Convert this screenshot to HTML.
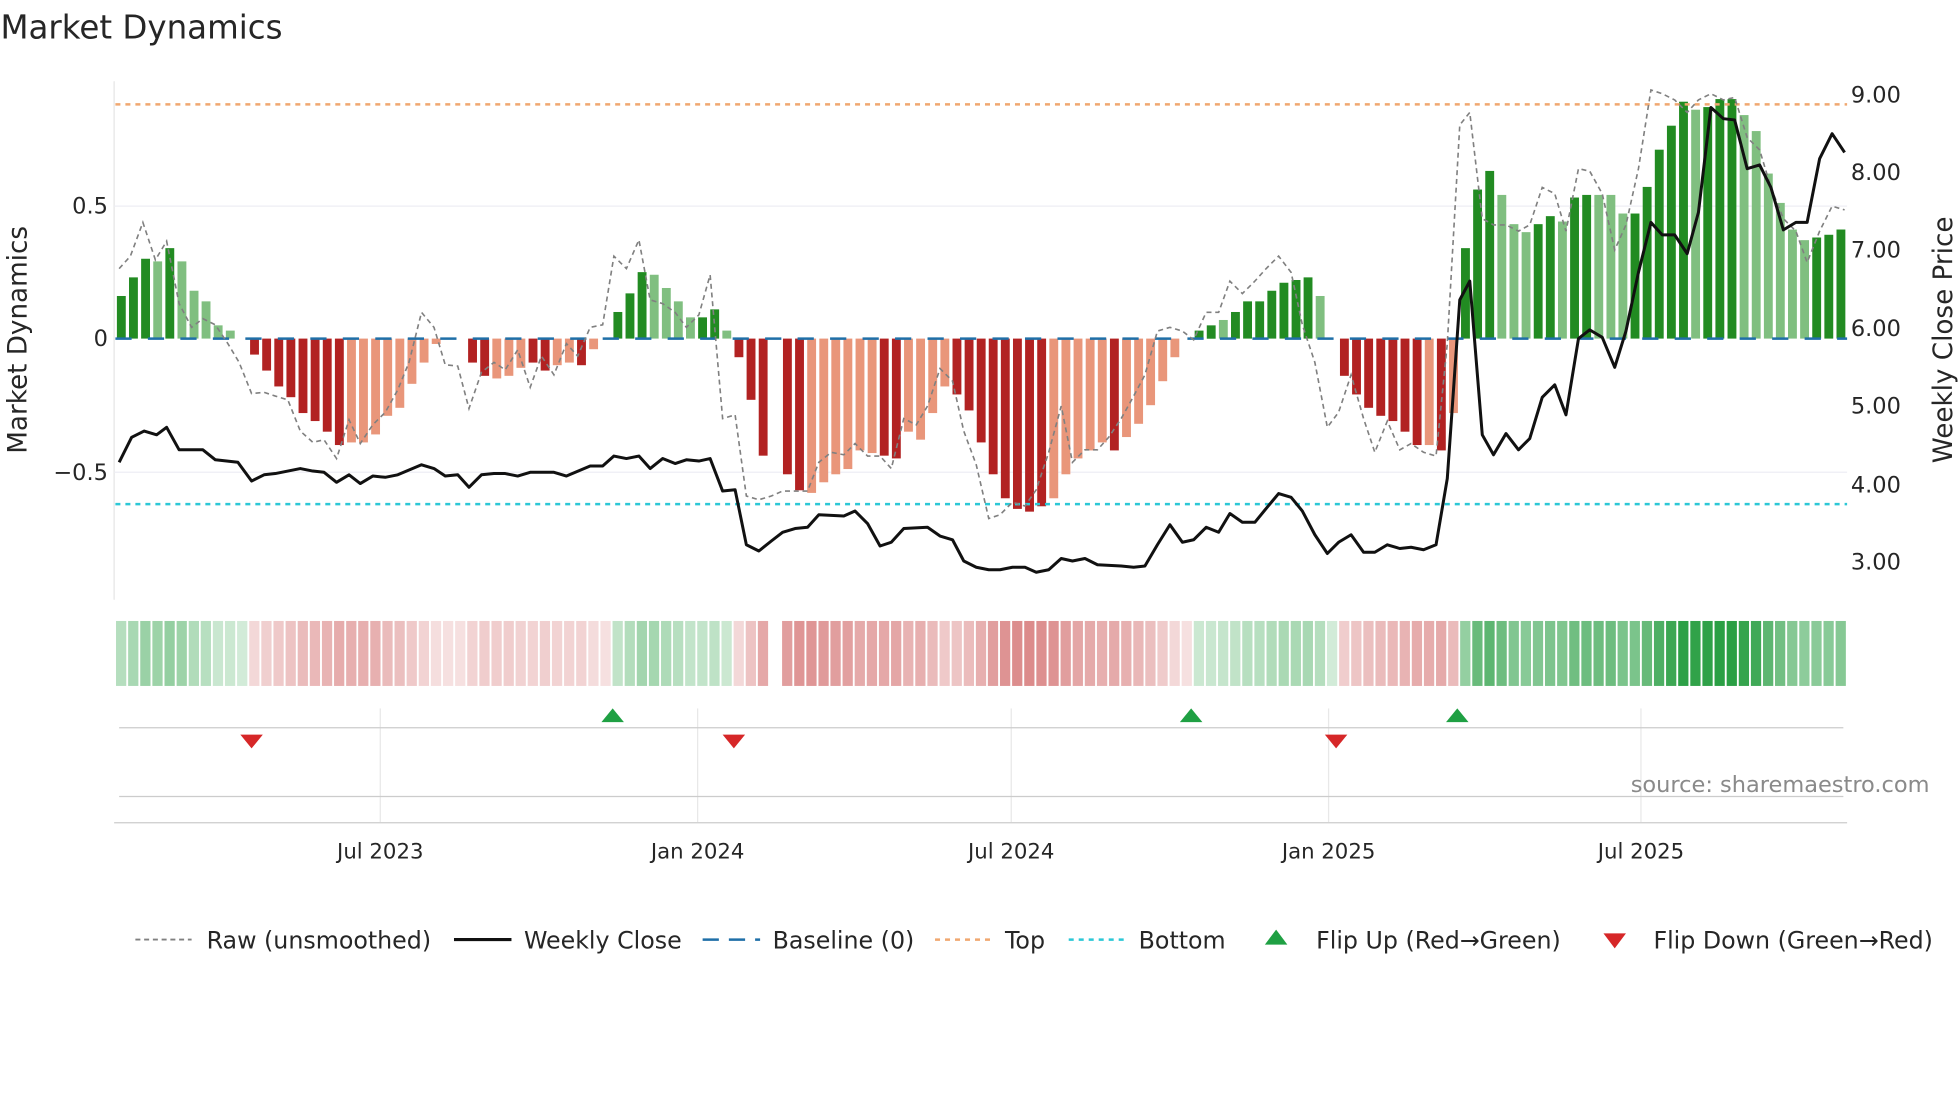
<!DOCTYPE html>
<html><head><meta charset="utf-8"><style>
html,body{margin:0;padding:0;background:#fff;width:1960px;height:1102px;overflow:hidden}
svg{display:block}
text{font-family:"DejaVu Sans","Liberation Sans",sans-serif;fill:#262626}
</style></head><body>
<svg id="s" width="1960" height="1102" viewBox="0 0 1568 882" xmlns="http://www.w3.org/2000/svg">
<text x="0" y="31" font-size="26">Market Dynamics</text>
<line x1="91" y1="65" x2="91" y2="480" stroke="#e6e6e6"/>
<line x1="91" y1="165" x2="1478" y2="165" stroke="#eeeef4"/>
<line x1="91" y1="378" x2="1478" y2="378" stroke="#eeeef4"/>
<g id="bars"></g>
<line x1="92" y1="271" x2="1478" y2="271" stroke="#1f6fa8" stroke-width="2" stroke-dasharray="13,13"/>
<line x1="92" y1="83.5" x2="1478" y2="83.5" stroke="#f0a870" stroke-width="2" stroke-dasharray="4,4"/>
<line x1="92" y1="403.5" x2="1478" y2="403.5" stroke="#2cc8d6" stroke-width="2" stroke-dasharray="4,4"/>
<polyline id="raw" fill="none" stroke="#808080" stroke-width="1.3" stroke-dasharray="4,3"/>
<polyline id="close" fill="none" stroke="#111" stroke-width="2.4" stroke-linejoin="round"/>
<g font-size="18" text-anchor="end">
<text x="86" y="171">0.5</text><text x="86" y="277">0</text><text x="86" y="384">−0.5</text>
</g>
<g font-size="18">
<text x="1481" y="82">9.00</text><text x="1481" y="144">8.00</text><text x="1481" y="206">7.00</text>
<text x="1481" y="269">6.00</text><text x="1481" y="331">5.00</text><text x="1481" y="394">4.00</text><text x="1481" y="456">3.00</text>
</g>
<text font-size="21" text-anchor="middle" transform="translate(21,272) rotate(-90)">Market Dynamics</text>
<text font-size="21" text-anchor="middle" transform="translate(1562,272) rotate(-90)">Weekly Close Price</text>
<g id="heat"></g>
<g stroke="#e8e8e8">
<line x1="304" y1="567" x2="304" y2="658"/><line x1="558" y1="567" x2="558" y2="658"/><line x1="809" y1="567" x2="809" y2="658"/><line x1="1063" y1="567" x2="1063" y2="658"/><line x1="1313" y1="567" x2="1313" y2="658"/>
</g>
<line x1="95" y1="582.5" x2="1475" y2="582.5" stroke="#cccccc"/>
<line x1="95" y1="637.5" x2="1475" y2="637.5" stroke="#cccccc"/>
<line x1="91" y1="658.5" x2="1478" y2="658.5" stroke="#cccccc"/>
<g fill="#1fa043">
<polygon points="490,567 499,578 481,578"/><polygon points="953,567 962,578 944,578"/><polygon points="1166,567 1175,578 1157,578"/>
</g>
<g fill="#d62728">
<polygon points="192,588 210,588 201,599"/><polygon points="578,588 596,588 587,599"/><polygon points="1060,588 1078,588 1069,599"/>
</g>
<text x="1544" y="634" font-size="18" fill="#8a8a8a" text-anchor="end" style="fill:#8a8a8a">source: sharemaestro.com</text>
<g font-size="17" text-anchor="middle">
<text x="304" y="687">Jul 2023</text><text x="558" y="687">Jan 2024</text><text x="809" y="687">Jul 2024</text><text x="1063" y="687">Jan 2025</text><text x="1313" y="687">Jul 2025</text>
</g>
<g font-size="19">
<line x1="108" y1="752" x2="153" y2="752" stroke="#808080" stroke-width="1.5" stroke-dasharray="4,3"/>
<text x="165" y="759">Raw (unsmoothed)</text>
<line x1="363" y1="752" x2="409" y2="752" stroke="#111" stroke-width="2.5"/>
<text x="419" y="759">Weekly Close</text>
<line x1="562" y1="752" x2="608" y2="752" stroke="#1f6fa8" stroke-width="2" stroke-dasharray="13,8"/>
<text x="618" y="759">Baseline (0)</text>
<line x1="748" y1="752" x2="794" y2="752" stroke="#f0a870" stroke-width="2" stroke-dasharray="4,4"/>
<text x="804" y="759">Top</text>
<line x1="855" y1="752" x2="901" y2="752" stroke="#2cc8d6" stroke-width="2" stroke-dasharray="4,4"/>
<text x="911" y="759">Bottom</text>
<polygon points="1021,744 1030,756 1012,756" fill="#1fa043"/>
<text x="1053" y="759">Flip Up (Red→Green)</text>
<polygon points="1283,747 1301,747 1292,759" fill="#d62728"/>
<text x="1323" y="759">Flip Down (Green→Red)</text>
</g>
</svg>
<script>
var B=[[.16,'G'],[.23,'G'],[.30,'G'],[.29,'g'],[.34,'G'],[.29,'g'],[.18,'g'],[.14,'g'],[.05,'g'],[.03,'g'],[0,'g'],
[-.06,'R'],[-.12,'R'],[-.18,'R'],[-.22,'R'],[-.28,'R'],[-.31,'R'],[-.35,'R'],[-.40,'R'],[-.39,'r'],[-.39,'r'],[-.36,'r'],[-.29,'r'],[-.26,'r'],[-.17,'r'],[-.09,'r'],[-.02,'r'],[0,'r'],[0,'r'],
[-.09,'R'],[-.14,'R'],[-.15,'r'],[-.14,'r'],[-.11,'r'],[-.09,'R'],[-.12,'R'],[-.10,'r'],[-.09,'r'],[-.10,'R'],[-.04,'r'],[0,'r'],
[.10,'G'],[.17,'G'],[.25,'G'],[.24,'g'],[.19,'g'],[.14,'g'],[.08,'g'],[.08,'G'],[.11,'G'],[.03,'g'],
[-.07,'R'],[-.23,'R'],[-.44,'R'],[null,'R'],[-.51,'R'],[-.57,'R'],[-.58,'r'],[-.54,'r'],[-.51,'r'],[-.49,'r'],[-.42,'r'],[-.43,'r'],[-.44,'R'],[-.45,'R'],[-.35,'r'],[-.38,'r'],[-.28,'r'],[-.18,'r'],[-.21,'R'],[-.27,'R'],[-.39,'R'],[-.51,'R'],[-.60,'R'],[-.64,'R'],[-.65,'R'],[-.63,'R'],[-.60,'r'],[-.51,'r'],[-.45,'r'],[-.42,'r'],[-.39,'r'],[-.42,'R'],[-.37,'r'],[-.32,'r'],[-.25,'r'],[-.16,'r'],[-.07,'r'],[0,'r'],
[.03,'G'],[.05,'G'],[.07,'g'],[.10,'G'],[.14,'G'],[.14,'G'],[.18,'G'],[.21,'G'],[.22,'G'],[.23,'G'],[.16,'g'],[0,'g'],
[-.14,'R'],[-.21,'R'],[-.26,'R'],[-.29,'R'],[-.31,'R'],[-.35,'R'],[-.40,'R'],[-.40,'r'],[-.42,'R'],[-.28,'r'],
[.34,'G'],[.56,'G'],[.63,'G'],[.54,'g'],[.43,'g'],[.40,'g'],[.43,'G'],[.46,'G'],[.44,'g'],[.53,'G'],[.54,'G'],[.54,'g'],[.54,'g'],[.47,'g'],[.47,'G'],[.57,'G'],[.71,'G'],[.80,'G'],[.89,'G'],[.86,'g'],[.87,'G'],[.90,'G'],[.90,'G'],[.84,'g'],[.78,'g'],[.62,'g'],[.51,'g'],[.41,'g'],[.37,'g'],[.38,'G'],[.39,'G'],[.41,'G']];
var C={G:'#228b22',g:'#80bf80',R:'#b22222',r:'#e9967a'};
var n=B.length,x0=92,w=(1478-92)/n,bh='',hh='';
for(var i=0;i<n;i++){var v=B[i][0],x=x0+i*w;
 if(v!==null&&v!==0){var y=271-v*213,t=Math.min(y,271),h=Math.abs(v*213);
  bh+='<rect x="'+(x+1.2).toFixed(1)+'" y="'+t.toFixed(1)+'" width="'+(w-2.6).toFixed(1)+'" height="'+h.toFixed(1)+'" fill="'+C[B[i][1]]+'"/>';}
 if(v!==null){var pos=B[i][1]=='G'||B[i][1]=='g';var a=0.2+0.75*Math.min(1,Math.abs(v)/0.9);
  hh+='<rect x="'+(x+0.5).toFixed(1)+'" y="497" width="'+(w-1.5).toFixed(1)+'" height="52" fill="'+(pos?'#1f9a3a':'#c03030')+'" fill-opacity="'+(pos?a:a*0.75).toFixed(2)+'"/>';}
}
document.getElementById('bars').innerHTML=bh;document.getElementById('heat').innerHTML=hh;
var CL="95,370 105,350 115,345 125,348 133,342 143,360 162,360 172,368 190,370 201,385 211,380 220,379 240,375 250,377 259,378 269,386 279,380 288,387 298,381 308,382 318,380 337,372 347,375 356,381 366,380 375,390 385,380 395,379 404,379 414,381 424,378 443,378 453,381 472,373 482,373 491,365 501,367 511,365 520,375 530,367 540,371 549,368 559,369 568,367 578,393 588,392 597,436 607,441 617,433 626,426 636,423 646,422 655,412 675,413 684,409 694,419 704,437 713,434 723,423 742,422 752,429 762,432 771,449 781,454 791,456 800,456 810,454 820,454 829,458 839,456 849,447 858,449 868,447 878,452 897,453 907,454 916,453 926,436 936,420 946,434 955,432 965,422 975,426 984,411 994,418 1004,418 1013,407 1023,395 1033,398 1042,409 1052,428 1062,443 1071,434 1081,428 1091,442 1100,442 1110,436 1120,439 1129,438 1139,440 1149,436 1158,383 1168,240 1176,225 1186,348 1195,364 1205,347 1215,360 1224,351 1234,318 1244,308 1253,332 1263,271 1272,264 1282,270 1292,294 1301,265 1311,218 1321,178 1330,188 1340,188 1350,203 1359,170 1369,86 1379,95 1388,96 1398,135 1408,132 1417,150 1427,184 1437,178 1446,178 1456,127 1466,107 1476,122";
var RW="95,215 104,205 114,178 124,208 133,193 143,243 153,262 162,255 172,260 182,275 191,290 201,315 211,314 220,317 230,320 240,345 250,354 259,352 269,367 279,336 288,355 298,340 308,330 318,312 327,290 337,250 347,262 356,292 366,293 375,327 385,298 395,290 404,296 414,280 424,310 433,285 443,300 453,275 462,285 472,262 482,260 491,205 501,215 511,192 520,240 530,243 540,250 549,262 559,252 568,220 578,335 588,332 597,397 607,400 617,397 626,393 636,393 646,393 655,370 665,362 675,364 684,355 694,365 704,365 713,375 723,335 733,340 742,325 752,295 762,305 771,345 781,372 791,415 800,412 810,402 820,405 829,392 839,362 849,325 858,370 868,360 878,360 887,350 897,335 907,317 916,300 926,265 936,262 946,265 955,272 965,250 975,250 984,225 994,235 1004,225 1013,215 1023,205 1033,218 1042,260 1052,290 1062,342 1071,330 1081,300 1091,335 1100,362 1110,337 1120,360 1129,355 1139,362 1149,365 1158,275 1168,100 1176,90 1186,175 1195,180 1205,180 1215,185 1224,180 1234,150 1244,155 1253,185 1263,135 1272,137 1282,155 1292,200 1301,180 1311,135 1321,72 1330,75 1340,80 1350,90 1359,80 1369,75 1379,80 1388,78 1398,110 1408,120 1417,150 1427,175 1437,185 1446,210 1456,185 1466,165 1476,168";
document.getElementById('close').setAttribute('points',CL);
document.getElementById('raw').setAttribute('points',RW);
</script>
</body></html>
